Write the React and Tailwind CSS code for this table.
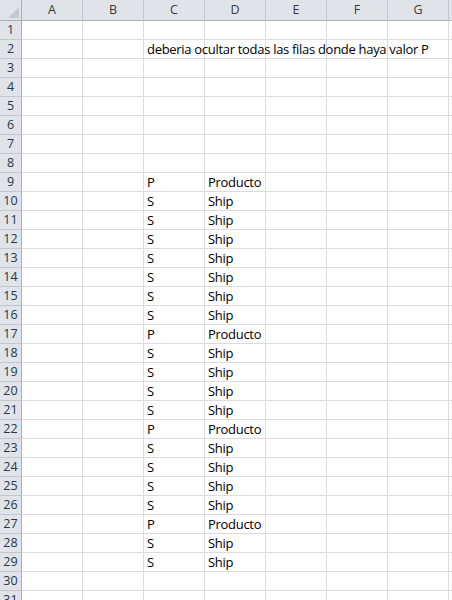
import React from "react";

const cols = ["A", "B", "C", "D", "E", "F", "G", ""];

const data = {
  2: { C: "deberia ocultar todas las filas donde haya valor P" },
};
const pattern = {
  9: "P", 10: "S", 11: "S", 12: "S", 13: "S", 14: "S", 15: "S", 16: "S",
  17: "P", 18: "S", 19: "S", 20: "S", 21: "S", 22: "P", 23: "S", 24: "S",
  25: "S", 26: "S", 27: "P", 28: "S", 29: "S",
};
Object.entries(pattern).forEach(([r, v]) => {
  data[r] = { C: v, D: v === "P" ? "Producto" : "Ship" };
});

const rows = Array.from({ length: 31 }, (_, i) => i + 1);

export default function App() {
  return (
    <div
      className="w-[452px] h-[600px] overflow-hidden bg-white"
      style={{ fontFamily: '"Open Sans", "Noto Sans", sans-serif' }}
    >
      <div className="flex h-[21px]">
        <div className="relative w-[22px] shrink-0 h-[21px] bg-[#e0e4e9] border-r border-b border-[#a9b0b8]">
          <div className="absolute right-[2px] bottom-[2px] w-0 h-0 border-l-[11px] border-l-transparent border-b-[11px] border-b-[#c4c9cf]" />
        </div>
        {cols.map((c, i) => (
          <div
            key={i}
            className="w-[61px] shrink-0 h-[21px] bg-[#e0e4e9] border-r border-b border-r-[#c3c8ce] border-b-[#a9b0b8] flex items-center justify-center text-[12.5px] text-[#3b3b3b]"
          >
            {c}
          </div>
        ))}
      </div>
      {rows.map((r) => (
        <div key={r} className="flex h-[19px]">
          <div className="w-[22px] shrink-0 h-[19px] bg-[#e0e4e9] border-r border-b border-r-[#a9b0b8] border-b-[#c3c8ce] flex items-center justify-center pt-[1px] text-[12.5px] text-[#27364b]">
            {r}
          </div>
          {cols.map((c, i) => {
            const v = data[r] && data[r][c];
            return (
              <div
                key={i}
                className="relative w-[61px] shrink-0 h-[19px] border-r border-b border-[#dadcdf]"
              >
                {v && (
                  <span className="absolute left-[3px] top-[1px] whitespace-nowrap text-[13px] leading-[17px] tracking-[-0.3px] text-black z-10">
                    {v}
                  </span>
                )}
              </div>
            );
          })}
        </div>
      ))}
    </div>
  );
}
